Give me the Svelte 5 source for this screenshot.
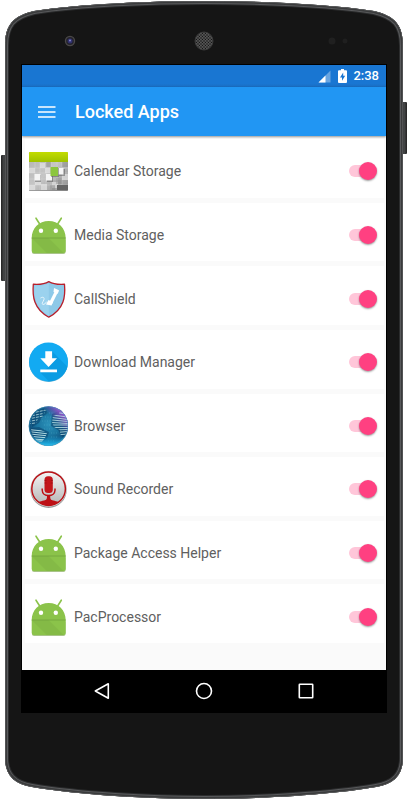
<script lang="ts">
  type App = { name: string; icon: string; locked: boolean };

  let apps: App[] = $state([
    { name: 'Calendar Storage', icon: 'calendar', locked: true },
    { name: 'Media Storage', icon: 'android', locked: true },
    { name: 'CallShield', icon: 'shield', locked: true },
    { name: 'Download Manager', icon: 'download', locked: true },
    { name: 'Browser', icon: 'globe', locked: true },
    { name: 'Sound Recorder', icon: 'mic', locked: true },
    { name: 'Package Access Helper', icon: 'android', locked: true },
    { name: 'PacProcessor', icon: 'android', locked: true },
  ]);

  const outline =
    'M5 46C5 25 13 16 34 11C80 4 150 1 204 1C258 1 328 4 374 11C395 16 403 25 403 46V758C403 775 394 784 376 787C330 795 258 799 204 799C150 799 78 795 32 787C14 784 5 775 5 758Z';
</script>

{#snippet calendar()}
  <defs>
    <linearGradient id="cal-top" x1="0" y1="0" x2="0" y2="1">
      <stop offset="0" stop-color="#c3dc00" />
      <stop offset="1" stop-color="#9fc200" />
    </linearGradient>
    <linearGradient id="cal-body" x1="0" y1="0" x2="1" y2="1">
      <stop offset="0" stop-color="#b4b4b4" />
      <stop offset="0.5" stop-color="#c6c6c6" />
      <stop offset="1" stop-color="#909090" />
    </linearGradient>
  </defs>
  <rect x="1" y="1.5" width="39" height="38.5" rx="1" fill="#777" />
  <rect x="1" y="1" width="39" height="38.5" rx="1" fill="url(#cal-body)" />
  <path d="M1 11h39V2a1 1 0 0 0-1-1H2a1 1 0 0 0-1 1z" fill="url(#cal-top)" />
  <path d="M1 17h6v5H1zM7 28h6v6H7zM1 34h6v5H1zM13 33h6v6h-6zM24 31h6v6h-6zM34 23h6v6h-6zM12 12h5v5h-5zM17 17h5v5h-5z" fill="#e2e2e2" opacity="0.7" />
  <path d="M18 11h5v5h-5zM28 27h6v6h-6zM34 11h6v5h-6zM22 34h5v5h-5z" fill="#868686" opacity="0.5" />
  <path d="M1 17h39M1 22h39M1 28h39M1 34h39M7 11v28M12 11v28M18 11v28M23 11v28M29 11v28M34 11v28" stroke="#eee" stroke-width=".4" opacity=".6" />
  <path d="M29 34h11v5H29z" fill="#656565" />
  <path d="M7 24h6v7H7zM19 24h6v7h-6zM31 18h6v7h-6z" fill="#555" opacity=".5" />
  <path d="M6.500 23h6v6.500h-6zM18 23h6v6.500h-6zM30 17h5.500v6.500H30z" fill="#f5f5f5" />
  <path d="M23 17h8v9h-8z" fill="#555" opacity=".5" />
  <path d="M22.500 16h7.500v9h-7.500z" fill="#8cc63f" />
{/snippet}

{#snippet android()}
  <path d="M8 3.200l3.500 5.500M33.300 3.200l-3.500 5.500" stroke="#8bc34a" stroke-width="1.600" stroke-linecap="round" />
  <path d="M4 24.500v12.500a2 2 0 0 0 2 2h29.500a2 2 0 0 0 2-2V24.500z" fill="#6f9c3b" opacity=".6" />
  <path d="M3.700 23C3.700 13 11 6 20.700 6s17 7 17 17v13a2 2 0 0 1-2 2h-30a2 2 0 0 1-2-2z" fill="#8bc34a" />
  <path d="M3.700 23h17l15 15h-17z" fill="#7fb344" opacity=".55" />
  <path d="M3.700 23h34" stroke="#72a23d" stroke-width=".8" />
  <circle cx="13" cy="15.700" r="2.200" fill="#fff" />
  <circle cx="27.800" cy="15.700" r="2.200" fill="#fff" />
{/snippet}

{#snippet shield()}
  <path d="M20.800 2.600C16 5.400 10.500 5.600 5.300 5.200C4.300 17 5.500 30 20.800 38.200C36.500 30 37.500 17 36.500 5.200C31 5.600 25.800 5.400 20.800 2.600z" fill="#8ec9e8" stroke="#b8202c" stroke-width="1.300" stroke-linejoin="round" />
  <path d="M20.800 4.200C16 6.600 11 6.900 6.500 6.600C5.900 17 7 29 20.800 36.700z" fill="#9bd2ee" />
  <path d="M29 11.500L22.500 24.500" stroke="#fff" stroke-width="3.200" />
  <path d="M26 9l5 2.300-1.200 3.400-4.300-1.600zM20.500 21l4.500 2-1.500 3.500-5.500-1z" fill="#fff" />
  <path d="M12.500 19c2.600-1.500 4.300-.5 3.300 2s-2.600 3.700-1 4.300 2.500-.8 3.800-2.600" fill="none" stroke="#eef8fd" stroke-width=".9" />
{/snippet}

{#snippet download()}
  <defs>
    <clipPath id="dl-clip"><circle cx="20.500" cy="20" r="19.500" /></clipPath>
  </defs>
  <circle cx="20.500" cy="20.400" r="19.500" fill="#0a83b8" opacity=".6" />
  <circle cx="20.500" cy="20" r="19.500" fill="#12aaf2" />
  <path d="M24.300 9.500l20 20v15H26L12.300 30.600l8-5z" fill="#0793d8" opacity=".6" clip-path="url(#dl-clip)" />
  <path d="M17.300 9.300h6.800v7H29l-8.400 8.600-8.300-8.600h5zM12.300 27.500H29v2.700H12.300z" fill="#fff" />
{/snippet}

{#snippet globe()}
  <defs>
    <radialGradient id="globe-sea" cx=".5" cy=".45" r=".58">
      <stop offset="0" stop-color="#2b90b8" />
      <stop offset=".5" stop-color="#1a75a0" />
      <stop offset=".85" stop-color="#10507c" />
      <stop offset="1" stop-color="#1684b4" />
    </radialGradient>
    <linearGradient id="globe-tint" x1=".3" y1=".7" x2=".9" y2=".15">
      <stop offset=".6" stop-color="#9747c9" stop-opacity="0" />
      <stop offset="1" stop-color="#b45be0" />
    </linearGradient>
    <linearGradient id="globe-low" x1="0" y1="0" x2="0" y2="1">
      <stop offset=".75" stop-color="#16b6ee" stop-opacity="0" />
      <stop offset="1" stop-color="#24c0f4" />
    </linearGradient>
    <clipPath id="land">
      <path d="M2 17C4 9 9 3 15 2l4 3-5 3 2 4-6 1-2 4-4 3zM3 23l8 0 8 4-2 5-4 5-5-3-4-6zM25 10l6-2 1-4c5 4 8 9 8 16s-2 8-5 11l-3-3 0-4-6-3-2-5z" />
    </clipPath>
  </defs>
  <circle cx="20.500" cy="20.500" r="19.800" fill="#345" opacity=".35" />
  <circle cx="20.500" cy="20" r="19.700" fill="url(#globe-sea)" />
  <path d="M4 13C6 7 11 3 17 3l3 4-6 4-3 6-7 4zM3 22l8-1 10 5-2 7-7 4C6 34 3 28 3 22zM24 8l9-4c6 6 8 19 2 28l-5-8-7-4z" fill="#0b416b" opacity=".55" />
  <path d="M16 7h10M17 11h7M14 15h9M16 19h7M16 23h10M23 27h6M23 31h7M20 35h7" stroke="#6ac6db" stroke-width=".6" stroke-dasharray="1 1.500" opacity=".55" />
  <circle cx="20.500" cy="20" r="19.700" fill="url(#globe-tint)" />
  <circle cx="20.500" cy="20" r="19.700" fill="url(#globe-low)" />
  <g clip-path="url(#land)" stroke="#c2e6ea" stroke-width=".9">
    <path d="M0 8l22-5M0 10.500l20-4M0 13l20-4M0 15.500l18-3M0 18l14-2" stroke-dasharray="3 1" opacity=".85" />
    <path d="M0 23.500l20 2M0 25.500l21 2.500M2 28l19 2M4 30.500l17 1.500M5 33l14 1M7 35h9" />
    <path d="M24 6l16 2M24 9l16 2M24 11.500l16 2M24 14l16 1.500M24 16.500l16 1M24 19h16M24 21.500h16M25 24l15-.5M28 26.500l12-1M29 29l10-1" opacity=".9" />
  </g>
  <circle cx="20.500" cy="20" r="19.300" fill="none" stroke="#3f9fc4" stroke-width=".7" opacity=".7" />
{/snippet}

{#snippet mic()}
  <defs>
    <linearGradient id="mic-bg" x1="0" y1="0" x2="0" y2="1">
      <stop offset="0" stop-color="#f4f4f4" />
      <stop offset="1" stop-color="#b5b5b5" />
    </linearGradient>
    <clipPath id="mic-clip"><circle cx="20.600" cy="19.700" r="16.800" /></clipPath>
  </defs>
  <circle cx="20.600" cy="20.700" r="18.200" fill="#555" opacity=".6" />
  <circle cx="20.600" cy="19.700" r="18" fill="#ddd" />
  <circle cx="20.600" cy="19.700" r="16.800" fill="url(#mic-bg)" stroke="#b81217" stroke-width="1.500" />
  <path d="M7 38c1-5 5-5.500 9-6.500 2.500-.6 3-1 3-4.500h3.200c0 3.500.5 3.900 3 4.500 4 1 8 1.500 9 6.500z" fill="#bd1015" clip-path="url(#mic-clip)" />
  <rect x="16.500" y="7.200" width="8.300" height="16.800" rx="3.500" fill="#c3161b" />
  <path d="M16.500 11.500h2M16.500 14h2M22.800 11.500h2M22.800 14h2" stroke="#8d0b0f" stroke-width=".6" />
  <path d="M14.200 19.500V21c0 3.500 2.900 5.600 6.400 5.600s6.400-2.100 6.400-5.600v-1.500" fill="none" stroke="#bd1015" stroke-width="1.500" />
{/snippet}

<div class="phone">
  <svg class="shell" viewBox="0 0 408 800" preserveAspectRatio="none" aria-hidden="true">
    <defs>
      <linearGradient id="side-button">
        <stop offset="0" stop-color="#222" />
        <stop offset=".5" stop-color="#484a4b" />
        <stop offset="1" stop-color="#222" />
      </linearGradient>
      <clipPath id="shell-clip"><path d={outline} /></clipPath>
    </defs>
    <rect x="1" y="155" width="6" height="126" rx="1" fill="url(#side-button)" />
    <rect x="401" y="102" width="6" height="52" rx="1" fill="url(#side-button)" />
    <g clip-path="url(#shell-clip)">
      <path d={outline} fill="#151515" stroke="#2b2c2d" stroke-width="8" />
      <path d={outline} fill="none" stroke="#58595b" stroke-width="6" />
      <path d={outline} fill="none" stroke="#3a3b3c" stroke-width="4" />
      <path d={outline} fill="none" stroke="#6b6c6d" stroke-width="1" />
    </g>
  </svg>

  <div class="bezel">
    <svg class="camera" viewBox="0 0 12 12" aria-hidden="true">
      <circle cx="6" cy="6" r="5.200" fill="#4b4948" />
      <circle cx="6" cy="6" r="3.900" fill="#24232b" />
      <circle cx="6" cy="6" r="2.500" fill="#30306d" />
      <circle cx="6" cy="5.500" r="1" fill="#8585cb" />
    </svg>
    <svg class="speaker" viewBox="0 0 20 20" aria-hidden="true">
      <defs>
        <pattern id="mesh" width="3" height="3" patternUnits="userSpaceOnUse">
          <circle cx="1" cy="1" r=".8" fill="#111" />
          <circle cx="2.500" cy="2.500" r=".7" fill="#151515" />
        </pattern>
      </defs>
      <circle cx="10" cy="10" r="9" fill="#555" />
      <circle cx="10" cy="10" r="9" fill="url(#mesh)" />
      <circle cx="10" cy="10" r="9" fill="none" stroke="#3a3a3a" />
    </svg>
    <svg class="sensors" viewBox="0 0 20 8" aria-hidden="true">
      <circle cx="4" cy="4" r="3.500" fill="#202020" />
      <circle cx="17" cy="4" r="2.500" fill="#1f1f1f" />
    </svg>
  </div>

  <div class="screen">
    <div class="status">
      <svg width="13" height="13" viewBox="0 0 13 13" aria-hidden="true">
        <path d="M12.500 .5v12H.5z" fill="#fff" opacity=".35" />
        <path d="M7.500 5.500v7H.5z" fill="#fff" />
      </svg>
      <svg class="battery" width="9" height="14" viewBox="0 0 9 14" aria-hidden="true">
        <path d="M3 0h3v1.300h2a1 1 0 0 1 1 1V13a1 1 0 0 1-1 1H1a1 1 0 0 1-1-1V2.300a1 1 0 0 1 1-1h2z" fill="#fff" />
        <path d="M5.200 3.500L2 8.500h2v3.300l3.200-5h-2z" fill="#1976d2" />
      </svg>
      <time>2:38</time>
    </div>

    <header>
      <button class="menu" aria-label="Open menu">
        <svg width="18" height="12" viewBox="0 0 18 12" aria-hidden="true">
          <path d="M0 1h17.500M0 6h17.500M0 11h17.500" stroke="#fff" stroke-width="1.600" />
        </svg>
      </button>
      <h1>Locked Apps</h1>
    </header>

    <ul class="apps">
      {#each apps as app}
        <li>
          <label class="app">
            <svg class="icon" viewBox="0 0 40 40" aria-hidden="true">
              {#if app.icon === 'calendar'}
                {@render calendar()}
              {:else if app.icon === 'shield'}
                {@render shield()}
              {:else if app.icon === 'download'}
                {@render download()}
              {:else if app.icon === 'globe'}
                {@render globe()}
              {:else if app.icon === 'mic'}
                {@render mic()}
              {:else}
                {@render android()}
              {/if}
            </svg>
            <span class="name">{app.name}</span>
            <input type="checkbox" role="switch" bind:checked={app.locked} />
          </label>
        </li>
      {/each}
    </ul>

    <nav>
      <button aria-label="Back">
        <svg width="18" height="18" viewBox="0 0 18 18" aria-hidden="true">
          <path d="M15.300 1.800v14.400L2.300 9z" />
        </svg>
      </button>
      <button aria-label="Home">
        <svg width="18" height="18" viewBox="0 0 18 18" aria-hidden="true">
          <circle cx="9" cy="9" r="7.500" />
        </svg>
      </button>
      <button aria-label="Recent apps">
        <svg width="18" height="18" viewBox="0 0 18 18" aria-hidden="true">
          <rect x="2.300" y="2.300" width="13.400" height="13.400" rx=".5" />
        </svg>
      </button>
    </nav>
  </div>
</div>

<style>
  :global(body) {
    margin: 0;
    background: #fff;
    font-family: Roboto, "Liberation Sans", sans-serif;
  }

  .phone {
    position: relative;
    display: flex;
    flex-direction: column;
    box-sizing: border-box;
    min-height: 100vh;
    padding: 0 22px 88px;
  }

  .shell {
    position: absolute;
    inset: 0;
    width: 100%;
    height: 100%;
  }

  .bezel {
    position: relative;
    display: grid;
    grid-template-columns: 1fr 20px 1fr;
    align-items: center;
    box-sizing: border-box;
    height: 65px;
    padding-top: 16px;
  }

  .camera {
    width: 12px;
    margin-left: 42px;
  }

  .speaker {
    width: 20px;
  }

  .sensors {
    width: 20px;
    margin-right: 38px;
    justify-self: end;
  }

  .screen {
    position: relative;
    flex: 1;
    display: flex;
    flex-direction: column;
    background: #fafafa;
    box-shadow: 0 0 0 1px #000;
  }

  .status {
    display: flex;
    align-items: center;
    justify-content: flex-end;
    height: 22px;
    padding-right: 7px;
    background: linear-gradient(#1976d2 85%, #1a6dc0);
    color: #fff;
  }

  .battery {
    margin: 0 6px 0 7px;
  }

  time {
    font-size: 13px;
    font-weight: 500;
    line-height: 22px;
  }

  header {
    position: relative;
    display: flex;
    align-items: center;
    height: 49px;
    background: #2196f3;
    box-shadow: 0 1px 2px rgba(0, 0, 0, 0.4);
    color: #fff;
  }

  button {
    display: flex;
    align-items: center;
    justify-content: center;
    padding: 0;
    border: 0;
    background: none;
    cursor: pointer;
  }

  .menu {
    width: 49px;
    height: 49px;
  }

  h1 {
    margin: 0 0 0 4px;
    font-size: 18px;
    font-weight: 500;
    line-height: 24px;
  }

  .apps {
    flex: 1;
    display: flex;
    flex-direction: column;
    gap: 5px;
    margin: 0;
    padding: 3px 2px 27px 3px;
    list-style: none;
  }

  li {
    flex: 1;
    display: flex;
    min-height: 48px;
    background: #fff;
  }

  .app {
    flex: 1;
    display: flex;
    align-items: center;
    gap: 6px;
    padding: 6px 7px 0 3px;
    cursor: pointer;
  }

  .icon {
    flex: none;
    width: 40px;
    height: 40px;
  }

  .name {
    flex: 1;
    color: #606060;
    font-size: 14px;
    line-height: 20px;
  }

  input {
    appearance: none;
    position: relative;
    flex: none;
    width: 28px;
    height: 18px;
    margin: 0;
    cursor: pointer;
  }

  input::before {
    content: "";
    position: absolute;
    inset: 3px 3px 3px 0;
    border-radius: 6px;
    background: #bdbdbd;
  }

  input::after {
    content: "";
    position: absolute;
    top: 0;
    left: 0;
    width: 18px;
    height: 18px;
    border-radius: 50%;
    background: #fafafa;
    box-shadow: 0 1px 2px rgba(0, 0, 0, 0.4);
  }

  input:checked::before {
    background: #ffc6d9;
  }

  input:checked::after {
    left: 10px;
    background: #ff4081;
  }

  nav {
    display: flex;
    align-items: center;
    justify-content: center;
    gap: 54px;
    height: 42px;
    background: #000;
  }

  nav button {
    width: 48px;
    height: 42px;
  }

  nav svg {
    fill: none;
    stroke: #fff;
    stroke-width: 1.6px;
    stroke-linejoin: round;
  }
</style>
